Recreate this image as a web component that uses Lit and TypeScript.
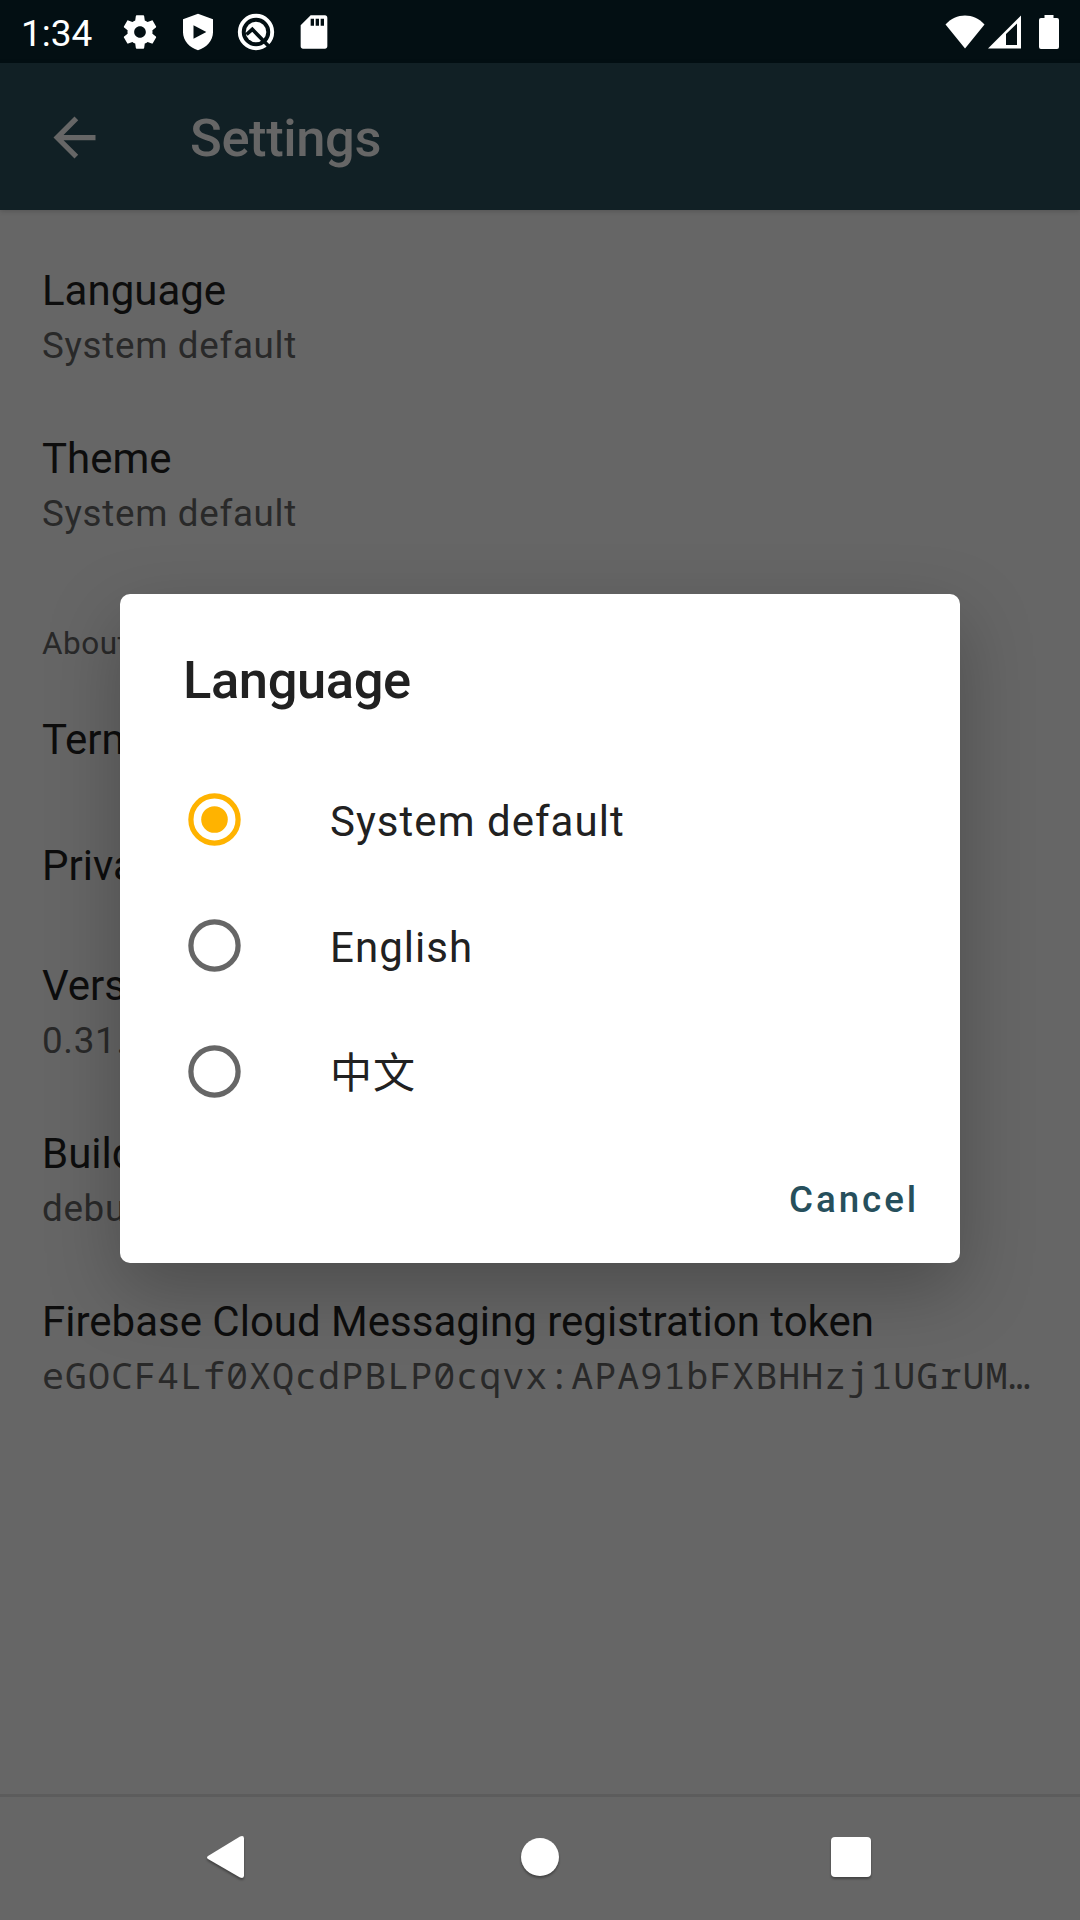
import { LitElement, html, css, svg } from "lit";
import { customElement, property } from "lit/decorators.js";

@customElement("status-bar")
class StatusBar extends LitElement {
  static styles = css`
    :host { display: flex; align-items: center; height: 63px; background: #030f13; color: #fff;
      padding: 0 21px 0 21px; box-sizing: border-box; }
    .time { font-size: 37px; line-height: 43px; width: 99px; white-space: nowrap; padding-top: 3px; }
    .left { display: flex; gap: 18px; }
    .left svg { width: 40px; height: 40px; display: block; }
    .right { margin-left: auto; display: flex; align-items: center; height: 36px; }
    .right svg { display: block; }
    .cell { margin-left: 3px; }
    .battery { margin-left: 18px; }
  `;
  render() {
    return html`
      <div class="time">1:34</div>
      <div class="left">
        <svg viewBox="0 0 24 24" fill="#fff"><path d="M19.43 12.98c.04-.32.07-.64.07-.98s-.03-.66-.07-.98l2.11-1.65c.19-.15.24-.42.12-.64l-2-3.46c-.12-.22-.39-.3-.61-.22l-2.49 1c-.52-.4-1.08-.73-1.69-.98l-.38-2.65C14.46 2.18 14.25 2 14 2h-4c-.25 0-.46.18-.49.42l-.38 2.65c-.61.25-1.17.59-1.69.98l-2.49-1c-.23-.09-.49 0-.61.22l-2 3.46c-.13.22-.07.49.12.64l2.11 1.65c-.04.32-.07.65-.07.98s.03.66.07.98l-2.11 1.65c-.19.15-.24.42-.12.64l2 3.46c.12.22.39.3.61.22l2.49-1c.52.4 1.08.73 1.69.98l.38 2.65c.03.24.24.42.49.42h4c.25 0 .46-.18.49-.42l.38-2.65c.61-.25 1.17-.59 1.69-.98l2.49 1c.23.09.49 0 .61-.22l2-3.46c.12-.22.07-.49-.12-.64l-2.11-1.65zM12 15.5c-1.93 0-3.5-1.57-3.5-3.5s1.57-3.5 3.5-3.5 3.5 1.57 3.5 3.5-1.57 3.5-3.5 3.5z"/></svg>
        <svg viewBox="0 0 24 24" fill="#fff" fill-rule="evenodd"><path d="M12 1L3 4.400v7.800C3 17.300 7 21.500 12 23c5-1.500 9-5.700 9-10.800V4.400zM9.300 7.900v8.200L17 12z"/></svg>
        <svg viewBox="0 0 40 40" fill="none">
          <circle cx="20" cy="20" r="16.200" stroke="#fff" stroke-width="3.900"/>
          <circle cx="20" cy="20" r="10.300" fill="#fff"/>
          <path d="M10.500 22.500L16.300 17.300L33 34.500" stroke="#030f13" stroke-width="3.600"/>
        </svg>
        <svg viewBox="0 0 24 24" fill="#fff"><path d="M18.600 2H10L4 8v12.600c0 .8.600 1.400 1.400 1.400h13.200c.8 0 1.400-.6 1.400-1.400V3.400c0-.8-.6-1.400-1.400-1.400zM12 8.200h-2V4h2zm3 0h-2V4h2zm3 0h-2V4h2z"/></svg>
      </div>
      <div class="right">
        <svg width="40" height="34" viewBox="0 0 40 34"><path d="M20 33.500L.5 9.500C11-2.500 29-2.500 39.500 9.500z" fill="#fff"/></svg>
        <svg class="cell" width="33" height="34" viewBox="0 0 33 34"><path fill="#fff" fill-rule="evenodd" d="M0 33.500L33 .5v33zM18 19v11h11V8.500z"/></svg>
        <svg class="battery" width="20" height="34" viewBox="0 0 20 34"><path fill="#fff" d="M5.500 0h9v3H18a2 2 0 0 1 2 2v27a2 2 0 0 1-2 2H2a2 2 0 0 1-2-2V5a2 2 0 0 1 2-2h3.500z"/></svg>
      </div>`;
  }
}

@customElement("pref-item")
class PrefItem extends LitElement {
  @property() label = "";
  @property() summary = "";
  @property({ type: Boolean }) mono = false;
  static styles = css`
    :host { display: block; padding: 39px 42px 0; height: 126px; box-sizing: border-box; white-space: nowrap; }
    :host([summary]) { height: 168px; padding-top: 33px; }
    .title { font-size: 42px; line-height: 49px; color: #0d0d0d; }
    .summary { margin-top: 9px; font-size: 36.750px; line-height: 43px; color: #292929; letter-spacing: 0.690px; }
    .mono { margin-top: 8px; font-family: "Noto Sans Mono", "Droid Sans Mono", "DejaVu Sans Mono", monospace; letter-spacing: 0.960px; }
  `;
  render() {
    return html`<div class="title">${this.label}</div>
      ${this.summary ? html`<div class="summary ${this.mono ? "mono" : ""}">${this.summary}</div>` : ""}`;
  }
}

@customElement("choice-dialog")
class ChoiceDialog extends LitElement {
  @property({ type: Array }) options: string[] = [];
  static styles = css`
    :host { display: flex; flex-direction: column; width: 840px; height: 669px; box-sizing: border-box; background: #fff;
      border-radius: 10px; box-shadow: 0 26px 72px rgba(0,0,0,.25); color: #212121; }
    .title { padding: 55px 63px 0; font-size: 52.500px; line-height: 62px; font-weight: 500; letter-spacing: -0.400px; }
    .list { margin-top: 45px; }
    .row { display: flex; align-items: center; height: 126px; padding-left: 63px; }
    .row svg { width: 63px; height: 63px; margin-right: 84px; display: block; }
    .label { font-size: 42px; line-height: 50px; letter-spacing: 1.030px; padding-top: 6px; }
    .cancel { align-self: flex-end; margin: 44px 41px 0 0; font-size: 36.750px; line-height: 43px; font-weight: 500;
      letter-spacing: 2.900px; color: #264f5c; }
  `;
  render() {
    return html`<div class="title">Language</div>
      <div class="list">${this.options.map((o, i) => html`<div class="row">
        <svg viewBox="0 0 63 63" fill="none">
          <circle cx="31.500" cy="31.500" r="23.600" stroke=${i ? "#666" : "#ffb300"} stroke-width="5.250"/>
          ${i ? "" : svg`<circle cx="31.500" cy="31.500" r="13.300" fill="#ffb300"/>`}
        </svg><span class="label">${o}</span></div>`)}</div>
      <div class="cancel">Cancel</div>`;
  }
}

@customElement("app-root")
class AppRoot extends LitElement {
  static styles = css`
    :host { display: flex; flex-direction: column; position: relative; width: 1080px; height: 1920px; overflow: hidden;
      background: #666; font-family: Roboto, "Noto Sans CJK SC", sans-serif; }
    .appbar { display: flex; align-items: center; height: 147px; background: #112025; color: #666;
      box-shadow: 0 1px 5px rgba(0,0,0,.18); }
    .appbar svg { width: 63px; height: 63px; margin: 1px 0 0 43px; display: block; }
    .heading { margin-left: 84px; font-size: 52.500px; line-height: 62px; font-weight: 500; padding-top: 3px;
      letter-spacing: -0.400px; }
    .list { flex: 1; padding-top: 23px; }
    .category { height: 107px; box-sizing: border-box; padding: 56px 42px 0; font-size: 31.500px; line-height: 38px;
      letter-spacing: 0.500px; color: #292929; }
    .nav { height: 126px; box-sizing: border-box; border-top: 3px solid #5c5c5c; }
    .nav svg { display: block; filter: drop-shadow(0 2px 1px rgba(0,0,0,.35)); }
    .dialog { position: absolute; left: 120px; top: 594px; }
  `;
  render() {
    return html`
      <status-bar></status-bar>
      <div class="appbar">
        <svg viewBox="0 0 24 24" fill="#666"><path d="M20 11H7.830l5.590-5.590L12 4l-8 8 8 8 1.410-1.410L7.830 13H20v-2z"/></svg>
        <div class="heading">Settings</div>
      </div>
      <div class="list">
        <pref-item label="Language" summary="System default"></pref-item>
        <pref-item label="Theme" summary="System default"></pref-item>
        <div class="category">About</div>
        <pref-item label="Terms"></pref-item>
        <pref-item label="Privacy"></pref-item>
        <pref-item label="Version" summary="0.31.0"></pref-item>
        <pref-item label="Build" summary="debug"></pref-item>
        <pref-item mono label="Firebase Cloud Messaging registration token" summary="eGOCF4Lf0XQcdPBLP0cqvx:APA91bFXBHHzj1UGrUM…"></pref-item>
      </div>
      <div class="nav">
        <svg width="1080" height="123" viewBox="0 1797 1080 123" fill="#fff">
          <path d="M208 1856L240 1836.500q4-1.500 4 2v37q0 3.500-4 2L208 1859q-2-1.500 0-3z"/>
          <circle cx="540" cy="1857" r="19"/>
          <rect x="831" y="1837" width="40" height="40" rx="4"/>
        </svg>
      </div>
      <choice-dialog class="dialog" .options=${["System default", "English", "中文"]}></choice-dialog>`;
  }
}
